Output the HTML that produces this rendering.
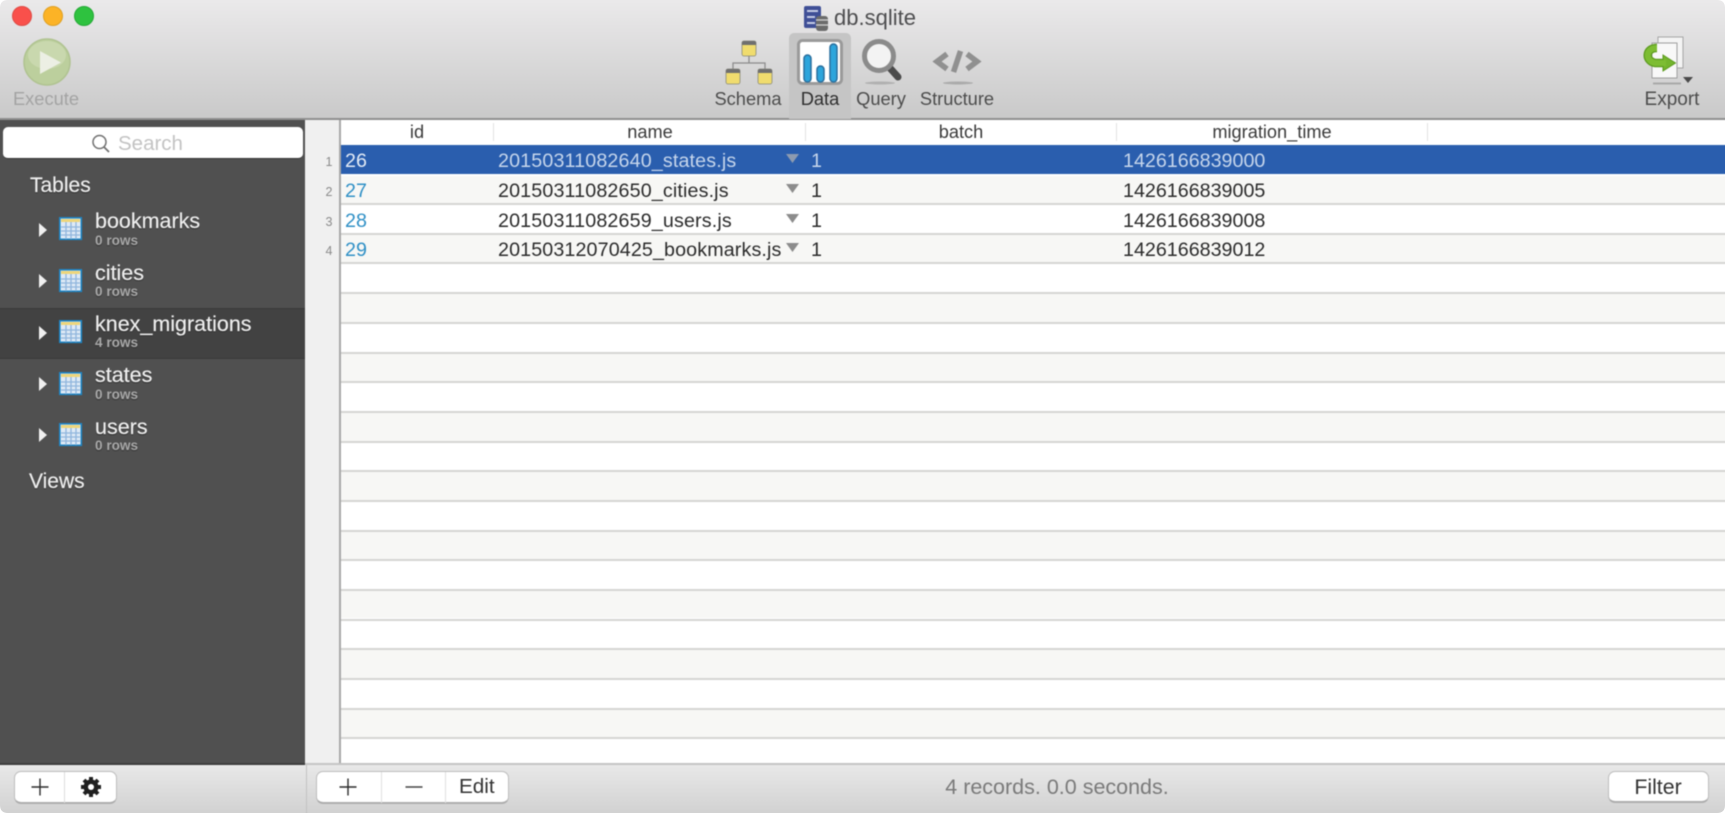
<!DOCTYPE html>
<html><head><meta charset="utf-8"><style>
*{box-sizing:border-box}
html,body{margin:0;padding:0;width:1725px;height:813px;overflow:hidden;background:#fff}
body{font-family:"Liberation Sans",sans-serif}
#clip{position:absolute;left:0;top:0;width:1725px;height:813px;overflow:hidden}
#w{position:absolute;left:0;top:0;width:1725px;height:813px;filter:blur(.6px)}
#w div,#w svg,#w span{position:absolute}
.t{white-space:nowrap;line-height:1}
.c{transform:translateX(-50%)}
.tb{font-size:18.3px;color:#4c4c4c;top:90px}
.n{left:95px;font-size:21.5px;color:#eee;-webkit-text-stroke:.2px #eee;text-shadow:0 1px 1px #2a2a2a}
.r{left:95px;font-size:13.6px;color:#a9a9a9;font-weight:700;text-shadow:0 1px 1px #333}
.h{top:123px;font-size:18.2px;color:#3a3a3a}
.v{font-size:19.7px;color:#2b2b2b}
.id{left:345px;font-size:19.7px;color:#2f90c6}
.ln{font-size:12.5px;color:#8a8a8a;left:329px}
.sep{top:123px;width:1px;height:18px;background:#e2e2e2}
.rl{left:340px;width:1390px;height:2px;background:#d5d5d3}
.st{left:340px;width:1390px;height:28px;background:#f7f7f5}
.btn{background:#fff;border:1px solid #bdbdbd;border-bottom:2px solid #adadad;border-radius:7px}
.cr{position:absolute}
</style></head><body>
<div id="clip">
<div id="w">
<div style="left:-5px;top:-5px;width:1735px;height:124px;background:linear-gradient(#ecebec,#c9c9c9)"></div>
<div style="left:-5px;top:118px;width:1735px;height:2px;background:#8f8f8f"></div>
<div style="left:789px;top:33px;width:62px;height:86px;background:#c5c5c5;border-radius:5px 5px 0 0"></div>

<svg style="left:0;top:0" width="100" height="32"><circle cx="22" cy="16" r="9.5" fill="#f9504b" stroke="#df4a44"/><circle cx="53" cy="16" r="9.5" fill="#fcb326" stroke="#dfa023"/><circle cx="84" cy="16" r="9.5" fill="#2ec23f" stroke="#24a935"/></svg>
<svg style="left:20px;top:35px" width="54" height="54"><ellipse cx="27" cy="27" rx="23" ry="23" fill="#bccf9d" stroke="#b0c391" stroke-width="1.5"/><ellipse cx="27" cy="20" rx="19" ry="14" fill="#c9d8ae"/><path d="M20 16V39L41 27.5Z" fill="#ecefe4"/></svg>
<span class="t tb c" style="left:46px;color:#a3a3a3">Execute</span>

<svg style="left:803px;top:5px" width="26" height="26"><rect x="1" y="1" width="17" height="22" rx="2" fill="#3f4f96"/><rect x="4" y="5" width="11" height="2" fill="#c5cbe6"/><rect x="4" y="11" width="8" height="2" fill="#c5cbe6"/><rect x="4" y="17" width="8" height="2" fill="#c5cbe6"/><rect x="13" y="11" width="12" height="15" rx="3" fill="#6b6b6b"/><path d="M13 15h12M13 20h12" stroke="#d5d5d5" stroke-width="1.3"/></svg>
<span class="t" style="left:834px;top:7px;font-size:22px;color:#4d4d4f">db.sqlite</span>

<svg style="left:724px;top:39px" width="50" height="48"><path d="M25 16V24M9 32V24H41V32" fill="none" stroke="#8c8c8c" stroke-width="1.3"/><g stroke="#8a8a7a" stroke-width=".8"><rect x="18" y="2" width="14" height="15" rx="2" fill="#f0dc6e"/><rect x="2" y="30" width="14" height="15" rx="2" fill="#f0dc6e"/><rect x="34" y="30" width="14" height="15" rx="2" fill="#f0dc6e"/></g><path d="M18 6V4q0-2 2-2H30q2 0 2 2V6ZM2 34V32q0-2 2-2H14q2 0 2 2V34ZM34 34V32q0-2 2-2H46q2 0 2 2V34Z" fill="#6f6f6f"/></svg>
<span class="t tb c" style="left:748px">Schema</span>

<svg style="left:797px;top:39px" width="46" height="46"><rect x="1.5" y="1.5" width="43" height="43" rx="4" fill="#fff" stroke="#9a9a9a" stroke-width="3"/><g fill="#2ca5dc" stroke="#2a6f9e" stroke-width="1.5"><rect x="7" y="16" width="7" height="27" rx="3.5"/><rect x="20" y="27" width="7" height="16" rx="3.5"/><rect x="33" y="5" width="7" height="38" rx="3.5"/></g></svg>
<span class="t tb c" style="left:820px;color:#2e2e2e">Data</span>

<svg style="left:860px;top:37px" width="44" height="50"><ellipse cx="20" cy="46" rx="15" ry="1.5" fill="#b0b0b0"/><path d="M29 30L38 40" stroke="#4b4b4b" stroke-width="7" stroke-linecap="round"/><circle cx="19" cy="19" r="14.5" fill="#f3f3f3" stroke="#8b8b8b" stroke-width="5"/></svg>
<span class="t tb c" style="left:881px">Query</span>

<svg style="left:932px;top:48px" width="50" height="38"><g fill="none" stroke="#909090" stroke-width="5.5" stroke-linejoin="miter"><path d="M15 6L5 13.5L15 21"/><path d="M35 6L45 13.5L35 21"/><path d="M28.5 3L21.5 24"/></g><ellipse cx="26" cy="35" rx="15" ry="1.5" fill="#ababab"/></svg>
<span class="t tb c" style="left:957px">Structure</span>

<svg style="left:1642px;top:36px" width="56" height="52"><rect x="16" y="1" width="25" height="31" fill="#f4f4f4" stroke="#a5a5a5"/><rect x="10" y="7" width="25" height="35" fill="#f8f8f8" stroke="#9e9e9e"/><path d="M15 12C3 12 3 25 13 27H24" fill="none" stroke="#5b9a1e" stroke-width="8.5"/><path d="M21 19L33.5 27 21 35Z" fill="#74b52d" stroke="#5b9a1e"/><path d="M15 12C3 12 3 25 13 27H24" fill="none" stroke="#7dbd33" stroke-width="6"/><path d="M11 47.5H39" stroke="#a9a9a9" stroke-width="2"/><path d="M41 41H51L46 47Z" fill="#4a4a4a"/></svg>
<span class="t tb c" style="left:1672px;font-size:19px">Export</span>

<!-- sidebar -->
<div style="left:-5px;top:120px;width:310px;height:644px;background:#505050"></div>
<div style="left:3px;top:127px;width:300px;height:32px;background:#fff;border-radius:5px;border-bottom:1px solid #333"></div>
<svg style="left:90px;top:133px" width="22" height="22"><circle cx="9.5" cy="9" r="6.5" fill="none" stroke="#707070" stroke-width="1.5"/><path d="M14 14L19 19" stroke="#707070" stroke-width="1.8"/></svg>
<span class="t" style="left:118px;top:134px;font-size:20.5px;color:#c3c3c3">Search</span>
<span class="t" style="left:30px;top:175px;font-size:21px;color:#eee;-webkit-text-stroke:.2px #eee;text-shadow:0 1px 1px #2a2a2a">Tables</span>

<div style="left:-5px;top:308px;width:310px;height:51px;background:#424242;border-top:1px solid #3a3a3a;border-bottom:1px solid #3a3a3a"></div>

<svg style="left:38px;top:222px" width="10" height="16"><path d="M1 1L9 8 1 15Z" fill="#f0f0f0"/></svg>
<svg style="left:59px;top:217px" width="24" height="24"><rect x=".8" y=".8" width="21.5" height="21.5" fill="#dfeaf6" stroke="#1f85c4" stroke-width="1.6"/><rect x="2" y="2" width="19" height="3" fill="#eed67a"/><path d="M2 10H21M2 14H21M2 18H21M7 5V22M12 5V22M17 5V22" stroke="#8fb5dc" stroke-width="1.3"/></svg>
<span class="t n" style="top:211px">bookmarks</span><span class="t r" style="top:234px">0 rows</span>

<svg style="left:38px;top:273px" width="10" height="16"><path d="M1 1L9 8 1 15Z" fill="#f0f0f0"/></svg>
<svg style="left:59px;top:269px" width="24" height="24"><rect x=".8" y=".8" width="21.5" height="21.5" fill="#dfeaf6" stroke="#1f85c4" stroke-width="1.6"/><rect x="2" y="2" width="19" height="3" fill="#eed67a"/><path d="M2 10H21M2 14H21M2 18H21M7 5V22M12 5V22M17 5V22" stroke="#8fb5dc" stroke-width="1.3"/></svg>
<span class="t n" style="top:263px">cities</span><span class="t r" style="top:285px">0 rows</span>

<svg style="left:38px;top:325px" width="10" height="16"><path d="M1 1L9 8 1 15Z" fill="#f0f0f0"/></svg>
<svg style="left:59px;top:320px" width="24" height="24"><rect x=".8" y=".8" width="21.5" height="21.5" fill="#dfeaf6" stroke="#1f85c4" stroke-width="1.6"/><rect x="2" y="2" width="19" height="3" fill="#eed67a"/><path d="M2 10H21M2 14H21M2 18H21M7 5V22M12 5V22M17 5V22" stroke="#8fb5dc" stroke-width="1.3"/></svg>
<span class="t n" style="top:314px">knex_migrations</span><span class="t r" style="top:336px">4 rows</span>

<svg style="left:38px;top:376px" width="10" height="16"><path d="M1 1L9 8 1 15Z" fill="#f0f0f0"/></svg>
<svg style="left:59px;top:372px" width="24" height="24"><rect x=".8" y=".8" width="21.5" height="21.5" fill="#dfeaf6" stroke="#1f85c4" stroke-width="1.6"/><rect x="2" y="2" width="19" height="3" fill="#eed67a"/><path d="M2 10H21M2 14H21M2 18H21M7 5V22M12 5V22M17 5V22" stroke="#8fb5dc" stroke-width="1.3"/></svg>
<span class="t n" style="top:365px">states</span><span class="t r" style="top:388px">0 rows</span>

<svg style="left:38px;top:427px" width="10" height="16"><path d="M1 1L9 8 1 15Z" fill="#f0f0f0"/></svg>
<svg style="left:59px;top:423px" width="24" height="24"><rect x=".8" y=".8" width="21.5" height="21.5" fill="#dfeaf6" stroke="#1f85c4" stroke-width="1.6"/><rect x="2" y="2" width="19" height="3" fill="#eed67a"/><path d="M2 10H21M2 14H21M2 18H21M7 5V22M12 5V22M17 5V22" stroke="#8fb5dc" stroke-width="1.3"/></svg>
<span class="t n" style="top:417px">users</span><span class="t r" style="top:439px">0 rows</span>

<span class="t" style="left:29px;top:471px;font-size:21px;color:#eee;-webkit-text-stroke:.2px #eee;text-shadow:0 1px 1px #2a2a2a">Views</span>

<!-- table -->
<div style="left:305px;top:120px;width:35px;height:644px;background:#f0f0f0"></div>
<div style="left:340px;top:120px;width:1390px;height:644px;background:#fff"></div>
<div class="sep" style="left:493px"></div><div class="sep" style="left:805px"></div><div class="sep" style="left:1116px"></div><div class="sep" style="left:1427px"></div>
<span class="t h c" style="left:417px">id</span><span class="t h c" style="left:650px">name</span><span class="t h c" style="left:961px">batch</span><span class="t h c" style="left:1272px">migration_time</span>

<div class="st" style="top:176px"></div><div class="st" style="top:235px"></div><div class="st" style="top:294px"></div><div class="st" style="top:353px"></div><div class="st" style="top:413px"></div><div class="st" style="top:472px"></div><div class="st" style="top:531px"></div><div class="st" style="top:590px"></div><div class="st" style="top:650px"></div><div class="st" style="top:709px"></div>
<div class="rl" style="top:203px"></div><div class="rl" style="top:233px"></div><div class="rl" style="top:262px"></div><div class="rl" style="top:292px"></div><div class="rl" style="top:322px"></div><div class="rl" style="top:352px"></div><div class="rl" style="top:381px"></div><div class="rl" style="top:411px"></div><div class="rl" style="top:441px"></div><div class="rl" style="top:470px"></div><div class="rl" style="top:500px"></div><div class="rl" style="top:530px"></div><div class="rl" style="top:559px"></div><div class="rl" style="top:589px"></div><div class="rl" style="top:619px"></div><div class="rl" style="top:648px"></div><div class="rl" style="top:678px"></div><div class="rl" style="top:708px"></div><div class="rl" style="top:737px"></div>
<div style="left:340px;top:145px;width:1390px;height:29px;background:#2a5eae"></div>
<div style="left:339px;top:120px;width:2px;height:644px;background:#a8a8a8"></div>

<span class="t ln c" style="top:156px">1</span><span class="t ln c" style="top:186px">2</span><span class="t ln c" style="top:216px">3</span><span class="t ln c" style="top:245px">4</span>

<span class="t id" style="top:152px;color:#e4ecf6">26</span><span class="t v" style="left:498px;top:152px;color:#c6d6ec;letter-spacing:.14px">20150311082640_states.js</span><span class="t v" style="left:811px;top:152px;color:#c6d6ec">1</span><span class="t v" style="left:1123px;top:152px;color:#c6d6ec">1426166839000</span>
<span class="t id" style="top:182px">27</span><span class="t v" style="left:498px;top:182px;letter-spacing:.14px">20150311082650_cities.js</span><span class="t v" style="left:811px;top:182px">1</span><span class="t v" style="left:1123px;top:182px">1426166839005</span>
<span class="t id" style="top:212px">28</span><span class="t v" style="left:498px;top:212px;letter-spacing:.14px">20150311082659_users.js</span><span class="t v" style="left:811px;top:212px">1</span><span class="t v" style="left:1123px;top:212px">1426166839008</span>
<span class="t id" style="top:241px">29</span><span class="t v" style="left:498px;top:241px;letter-spacing:.12px">20150312070425_bookmarks.js</span><span class="t v" style="left:811px;top:241px">1</span><span class="t v" style="left:1123px;top:241px">1426166839012</span>

<svg style="left:786px;top:154px" width="14" height="10"><path d="M0 0H13L6.5 9Z" fill="#8d9bb0"/></svg>
<svg style="left:786px;top:184px" width="14" height="10"><path d="M0 0H13L6.5 9Z" fill="#8c8c8c"/></svg>
<svg style="left:786px;top:214px" width="14" height="10"><path d="M0 0H13L6.5 9Z" fill="#8c8c8c"/></svg>
<svg style="left:786px;top:243px" width="14" height="10"><path d="M0 0H13L6.5 9Z" fill="#8c8c8c"/></svg>

<!-- footer -->
<div style="left:-5px;top:764px;width:1735px;height:54px;background:linear-gradient(#e9e9e9,#cfcfcf)"></div>
<div style="left:305px;top:763px;width:1425px;height:2px;background:#c4c4c4"></div>
<div style="left:-5px;top:763px;width:310px;height:2px;background:#3d3d3d"></div>
<div style="left:306px;top:765px;width:1px;height:53px;background:#c2c2c2"></div>

<div class="btn" style="left:14px;top:771px;width:103px;height:33px"></div>
<div style="left:64px;top:772px;width:1px;height:31px;background:#dcdcdc"></div>
<svg style="left:30px;top:777px" width="20" height="20"><path d="M10 1.5V18.5M1.5 10H18.5" stroke="#2b2b2b" stroke-width="1.4"/></svg>
<svg style="left:79px;top:775px" width="24" height="24"><path d="M12 2V22M2 12H22M5 5L19 19M19 5L5 19" stroke="#1f1f1f" stroke-width="4"/><circle cx="12" cy="12" r="7.5" fill="#1f1f1f"/><circle cx="12" cy="12" r="3" fill="#fff"/></svg>

<div class="btn" style="left:316px;top:771px;width:193px;height:33px"></div>
<div style="left:381px;top:772px;width:1px;height:31px;background:#e0e0e0"></div>
<div style="left:445px;top:772px;width:1px;height:31px;background:#e0e0e0"></div>
<svg style="left:338px;top:777px" width="20" height="20"><path d="M10 1.5V18.5M1.5 10H18.5" stroke="#2b2b2b" stroke-width="1.4"/></svg>
<svg style="left:404px;top:777px" width="20" height="20"><path d="M1.5 10H18.5" stroke="#444" stroke-width="1.5"/></svg>
<span class="t" style="left:459px;top:777px;font-size:20.7px;color:#333">Edit</span>

<span class="t c" style="left:1057px;top:777px;font-size:21.5px;color:#7a7a7a">4 records. 0.0 seconds.</span>

<div class="btn" style="left:1608px;top:771px;width:101px;height:32px"></div>
<span class="t c" style="left:1658px;top:777px;font-size:21.3px;color:#333">Filter</span>
</div>
</div>
<svg class="cr" style="left:0;top:0" width="8" height="8"><path d="M0 0H8Q0 0 0 8Z" fill="#fff"/></svg>
<svg class="cr" style="left:1717px;top:0" width="8" height="8"><path d="M8 0H0Q8 0 8 8Z" fill="#fff"/></svg>
<svg class="cr" style="left:0;top:805px" width="8" height="8"><path d="M0 8H8Q0 8 0 0Z" fill="#fff"/></svg>
<svg class="cr" style="left:1717px;top:805px" width="8" height="8"><path d="M8 8H0Q8 8 8 0Z" fill="#fff"/></svg>
</body></html>
